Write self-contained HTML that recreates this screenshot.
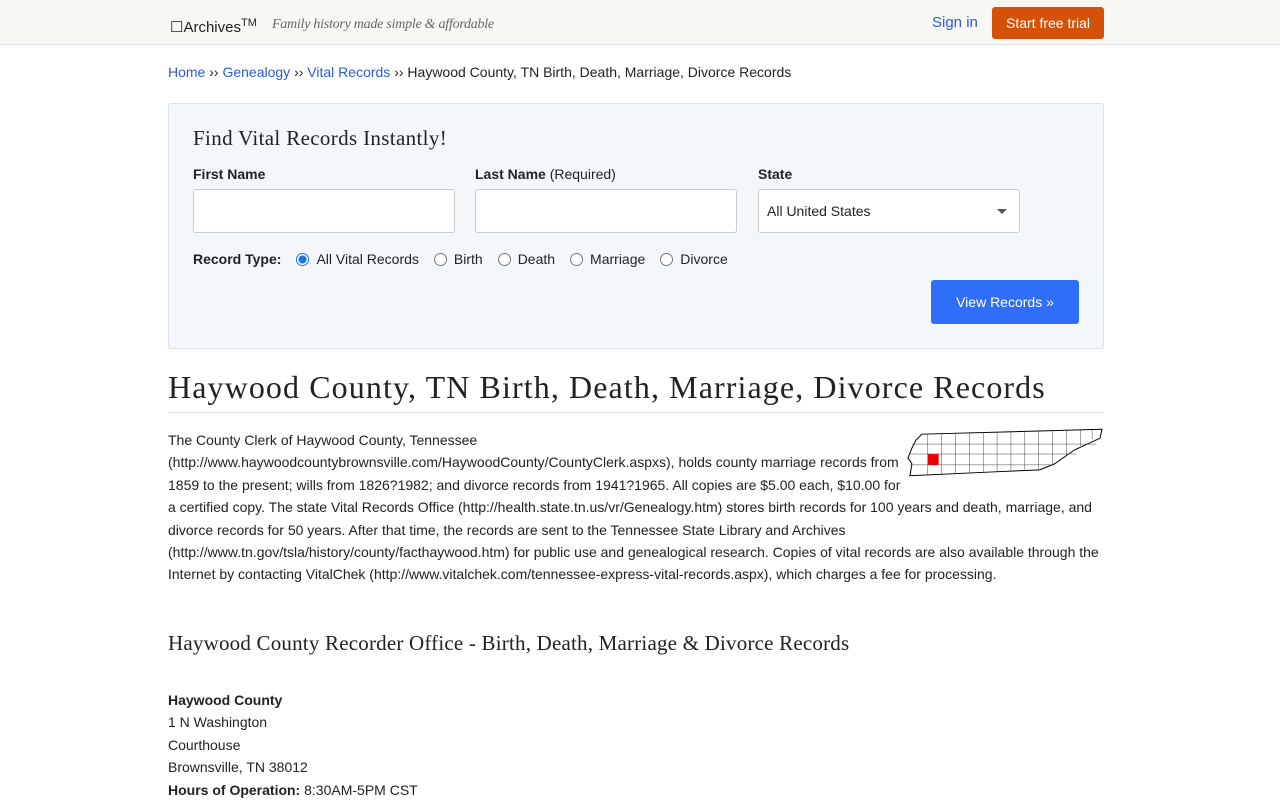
<!DOCTYPE html>
<html><head><meta charset="utf-8"><style>
*{box-sizing:border-box}
html,body{margin:0;height:800px;overflow:hidden}
body{font-family:"Liberation Sans",Arial,sans-serif;font-size:14px;color:#222;background:#fff;position:relative}
a{color:#2a5bd7;text-decoration:none}
.hdr{position:absolute;left:0;top:0;width:1280px;height:45px;background:#f7f7f4;border-bottom:1px solid #ddd}
.wrap{position:absolute;left:168px;top:0;width:936px}
.logo{position:absolute;left:2px;top:17px;font-size:15px;color:#222}
.logo sup{font-size:11px}
.tag{position:absolute;left:104px;top:17px;font-family:"Liberation Serif",serif;font-style:italic;font-size:14px;color:#666;letter-spacing:-0.25px}
.signin{position:absolute;left:764px;top:14px;font-size:15px}
.trial{position:absolute;left:824px;top:7px;width:112px;height:32px;background:#d4510a;color:#fff;border-radius:3px;font-size:14px;line-height:32px;text-align:center}
.bc{position:absolute;top:64px;left:0;font-size:14px}
.box{position:absolute;top:103px;left:0;width:936px;height:246px;background:#f4f7fa;border:1px solid #d8e1ea;border-radius:3px}
.box h3{position:absolute;left:24px;top:22px;margin:0;font-family:"Liberation Serif",serif;font-weight:normal;font-size:21px;color:#222;letter-spacing:0.35px}
.lbl{position:absolute;top:62px;font-weight:bold;font-size:14px}
.inp{position:absolute;top:85px;width:262px;height:44px;background:#fff;border:1px solid #ccc;border-radius:3px}
.sel{padding-left:8px;line-height:42px;font-size:14px}
.sel:after{content:"";position:absolute;right:12px;top:19px;border:5px solid transparent;border-top:5px solid #555}
.rt{position:absolute;top:147px;left:24px;font-size:14px}
.rt b{margin-right:15px}
.r{display:inline-block;width:13px;height:13px;border:1px solid #777;border-radius:50%;vertical-align:-2px;margin:0 7px 0 0;background:#fff}
.r.on{border:1px solid #1a73e8;background:radial-gradient(circle,#1a73e8 3.5px,#fff 4.5px)}
.rt span{margin-right:15px}
.btn{position:absolute;left:762px;top:176px;width:148px;height:44px;background:#2f6ef8;color:#fff;border-radius:3px;text-align:center;line-height:44px;font-size:14px}
h1{position:absolute;top:369px;left:0;margin:0;width:936px;font-family:"Liberation Serif",serif;font-weight:normal;font-size:32px;color:#222;border-bottom:1px solid #ddd;padding-bottom:4px;height:44px;letter-spacing:1.1px;white-space:nowrap}
.p{position:absolute;top:429px;left:0;width:936px;line-height:22.4px;font-size:14px;color:#222}
.map{float:right;margin:-1px 0 0 0;width:198px;height:50px}
h2{position:absolute;top:631px;left:0;margin:0;font-family:"Liberation Serif",serif;font-weight:normal;font-size:21px;color:#222;letter-spacing:0.2px}
.addr{position:absolute;top:689px;left:0;line-height:22.4px}
</style></head><body>
<div class="hdr"><div class="wrap">
<div class="logo">☐Archives<sup>TM</sup></div>
<div class="tag">Family history made simple &amp; affordable</div>
<a class="signin">Sign in</a>
<div class="trial">Start free trial</div>
</div></div>
<div class="wrap">
<div class="bc"><a>Home</a> ›› <a>Genealogy</a> ›› <a>Vital Records</a> ›› Haywood County, TN Birth, Death, Marriage, Divorce Records</div>
<div class="box">
<h3>Find Vital Records Instantly!</h3>
<div class="lbl" style="left:24px">First Name</div>
<div class="lbl" style="left:306px">Last Name <span style="font-weight:normal">(Required)</span></div>
<div class="lbl" style="left:589px">State</div>
<div class="inp" style="left:24px"></div>
<div class="inp" style="left:306px"></div>
<div class="inp sel" style="left:589px">All United States</div>
<div class="rt"><b>Record Type:</b><i class="r on"></i><span>All Vital Records</span><i class="r"></i><span>Birth</span><i class="r"></i><span>Death</span><i class="r"></i><span>Marriage</span><i class="r"></i><span>Divorce</span></div>
<div class="btn">View Records »</div>
</div>
<h1>Haywood County, TN Birth, Death, Marriage, Divorce Records</h1>
<div class="p"><svg class="map" viewBox="0 0 200 50"><path d="M16 6 L198 1 L196 10 L170 22 L150 36 L135 42 L90 44 L4 48 L6 36 L2 30 L6 20 L10 12 Z" fill="#fff" stroke="#000" stroke-width="1"/><g stroke="#444" stroke-width=".5" fill="none"><path d="M22 6V47M36 6V47M50 5V46M64 5V46M78 4V45M92 4V44M106 4V44M120 3V43M134 3V42M148 3V37M162 2V27M176 2V18M188 2V11M6 16H192M4 26H172M4 37H150"/></g><rect x="22" y="26" width="11" height="11" fill="#e00"/></svg>The County Clerk of Haywood County, Tennessee (http://www.haywoodcountybrownsville.com/HaywoodCounty/CountyClerk.aspxs), holds county marriage records from 1859 to the present; wills from 1826?1982; and divorce records from 1941?1965. All copies are $5.00 each, $10.00 for a certified copy. The state Vital Records Office (http://health.state.tn.us/vr/Genealogy.htm) stores birth records for 100 years and death, marriage, and divorce records for 50 years. After that time, the records are sent to the Tennessee State Library and Archives (http://www.tn.gov/tsla/history/county/facthaywood.htm) for public use and genealogical research. Copies of vital records are also available through the Internet by contacting VitalChek (http://www.vitalchek.com/tennessee-express-vital-records.aspx), which charges a fee for processing.</div>
<h2>Haywood County Recorder Office - Birth, Death, Marriage &amp; Divorce Records</h2>
<div class="addr"><b>Haywood County</b><br>1 N Washington<br>Courthouse<br>Brownsville, TN 38012<br><b>Hours of Operation:</b> 8:30AM-5PM CST</div>
</div>
</body></html>
